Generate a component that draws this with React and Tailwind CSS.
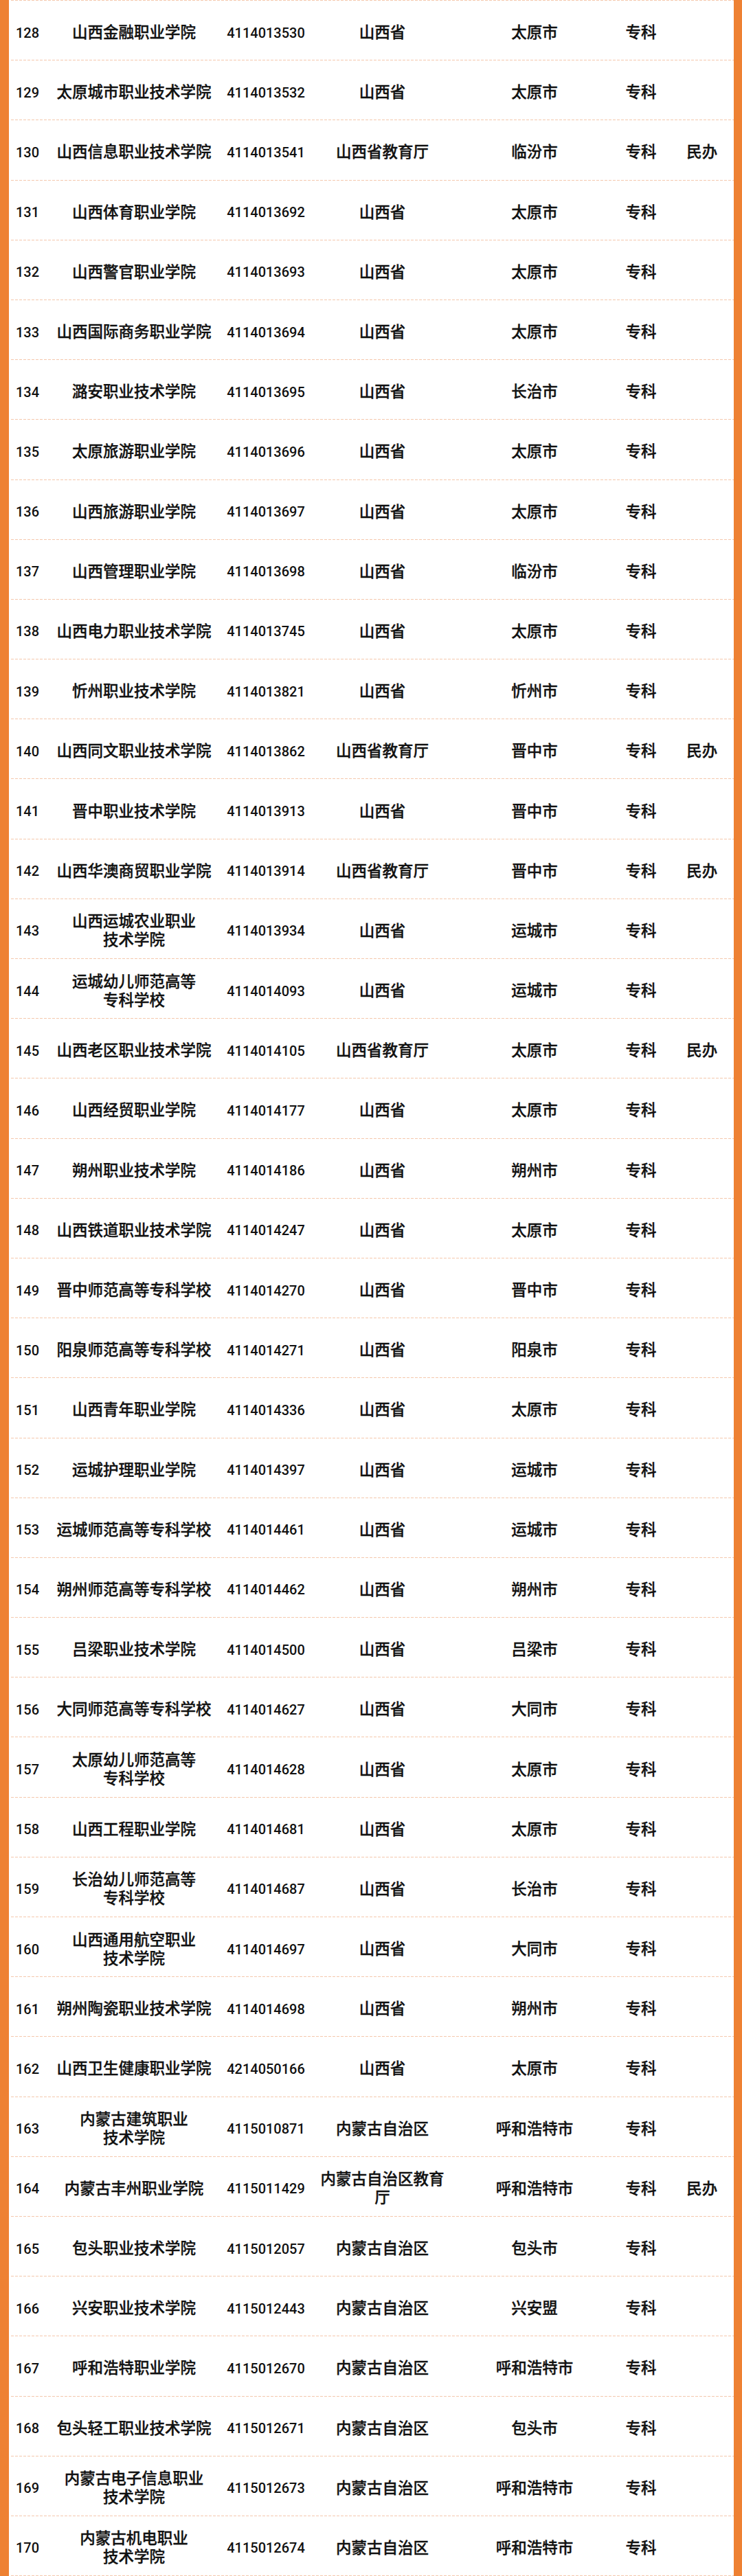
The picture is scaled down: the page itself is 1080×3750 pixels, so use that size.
const ROWS = [
  [128, '山西金融职业学院', '4114013530', '山西省', '太原市', '专科', ''],
  [129, '太原城市职业技术学院', '4114013532', '山西省', '太原市', '专科', ''],
  [130, '山西信息职业技术学院', '4114013541', '山西省教育厅', '临汾市', '专科', '民办'],
  [131, '山西体育职业学院', '4114013692', '山西省', '太原市', '专科', ''],
  [132, '山西警官职业学院', '4114013693', '山西省', '太原市', '专科', ''],
  [133, '山西国际商务职业学院', '4114013694', '山西省', '太原市', '专科', ''],
  [134, '潞安职业技术学院', '4114013695', '山西省', '长治市', '专科', ''],
  [135, '太原旅游职业学院', '4114013696', '山西省', '太原市', '专科', ''],
  [136, '山西旅游职业学院', '4114013697', '山西省', '太原市', '专科', ''],
  [137, '山西管理职业学院', '4114013698', '山西省', '临汾市', '专科', ''],
  [138, '山西电力职业技术学院', '4114013745', '山西省', '太原市', '专科', ''],
  [139, '忻州职业技术学院', '4114013821', '山西省', '忻州市', '专科', ''],
  [140, '山西同文职业技术学院', '4114013862', '山西省教育厅', '晋中市', '专科', '民办'],
  [141, '晋中职业技术学院', '4114013913', '山西省', '晋中市', '专科', ''],
  [142, '山西华澳商贸职业学院', '4114013914', '山西省教育厅', '晋中市', '专科', '民办'],
  [143, '山西运城农业职业|技术学院', '4114013934', '山西省', '运城市', '专科', ''],
  [144, '运城幼儿师范高等|专科学校', '4114014093', '山西省', '运城市', '专科', ''],
  [145, '山西老区职业技术学院', '4114014105', '山西省教育厅', '太原市', '专科', '民办'],
  [146, '山西经贸职业学院', '4114014177', '山西省', '太原市', '专科', ''],
  [147, '朔州职业技术学院', '4114014186', '山西省', '朔州市', '专科', ''],
  [148, '山西铁道职业技术学院', '4114014247', '山西省', '太原市', '专科', ''],
  [149, '晋中师范高等专科学校', '4114014270', '山西省', '晋中市', '专科', ''],
  [150, '阳泉师范高等专科学校', '4114014271', '山西省', '阳泉市', '专科', ''],
  [151, '山西青年职业学院', '4114014336', '山西省', '太原市', '专科', ''],
  [152, '运城护理职业学院', '4114014397', '山西省', '运城市', '专科', ''],
  [153, '运城师范高等专科学校', '4114014461', '山西省', '运城市', '专科', ''],
  [154, '朔州师范高等专科学校', '4114014462', '山西省', '朔州市', '专科', ''],
  [155, '吕梁职业技术学院', '4114014500', '山西省', '吕梁市', '专科', ''],
  [156, '大同师范高等专科学校', '4114014627', '山西省', '大同市', '专科', ''],
  [157, '太原幼儿师范高等|专科学校', '4114014628', '山西省', '太原市', '专科', ''],
  [158, '山西工程职业学院', '4114014681', '山西省', '太原市', '专科', ''],
  [159, '长治幼儿师范高等|专科学校', '4114014687', '山西省', '长治市', '专科', ''],
  [160, '山西通用航空职业|技术学院', '4114014697', '山西省', '大同市', '专科', ''],
  [161, '朔州陶瓷职业技术学院', '4114014698', '山西省', '朔州市', '专科', ''],
  [162, '山西卫生健康职业学院', '4214050166', '山西省', '太原市', '专科', ''],
  [163, '内蒙古建筑职业|技术学院', '4115010871', '内蒙古自治区', '呼和浩特市', '专科', ''],
  [164, '内蒙古丰州职业学院', '4115011429', '内蒙古自治区教育|厅', '呼和浩特市', '专科', '民办'],
  [165, '包头职业技术学院', '4115012057', '内蒙古自治区', '包头市', '专科', ''],
  [166, '兴安职业技术学院', '4115012443', '内蒙古自治区', '兴安盟', '专科', ''],
  [167, '呼和浩特职业学院', '4115012670', '内蒙古自治区', '呼和浩特市', '专科', ''],
  [168, '包头轻工职业技术学院', '4115012671', '内蒙古自治区', '包头市', '专科', ''],
  [169, '内蒙古电子信息职业|技术学院', '4115012673', '内蒙古自治区', '呼和浩特市', '专科', ''],
  [170, '内蒙古机电职业|技术学院', '4115012674', '内蒙古自治区', '呼和浩特市', '专科', ''],
]

function Dash() {
  return <div className="h-px ml-[3px] bg-[repeating-linear-gradient(to_right,#f4c8ad_0_4px,transparent_4px_6px)]" />
}

function Cjk({ text }) {
  const lines = text.split('|')
  return (
    <div className="flex justify-center">
      <div className="whitespace-nowrap text-center text-[22.5px] leading-[27px] font-medium [-webkit-text-stroke:0.35px_#111111]">
        {lines.map((l, i) => (
          <div key={i}>{l}</div>
        ))}
      </div>
    </div>
  )
}

function Row({ row }) {
  const [no, name, code, prov, city, kind, own] = row
  return (
    <div className="grid h-[86.19px] items-center pt-[7px] grid-cols-[47px_270px_114px_225px_218px_92px_85.4px]">
      <div className="pl-[10px] text-[20px] font-medium whitespace-nowrap font-['Roboto',sans-serif]">{no}</div>
      <Cjk text={name} />
      <div className="flex justify-center">
        <span className="whitespace-nowrap text-[20px] font-medium font-['Roboto',sans-serif]">{code}</span>
      </div>
      <Cjk text={prov} />
      <Cjk text={city} />
      <Cjk text={kind} />
      <Cjk text={own} />
    </div>
  )
}

export default function App() {
  return (
    <div className="flex w-[1080px] h-[3750px] overflow-hidden bg-white text-[#111111] font-['Liberation_Sans','Noto_Sans_CJK_SC',sans-serif]">
      <div className="w-[13px] shrink-0 bg-[#ee8133]" />
      <div className="flex-1">
        <Dash />
        {ROWS.map((r) => (
          <div key={r[0]}>
            <Row row={r} />
            <Dash />
          </div>
        ))}
      </div>
      <div className="w-[12px] shrink-0 bg-[#ee8133]" />
    </div>
  )
}
